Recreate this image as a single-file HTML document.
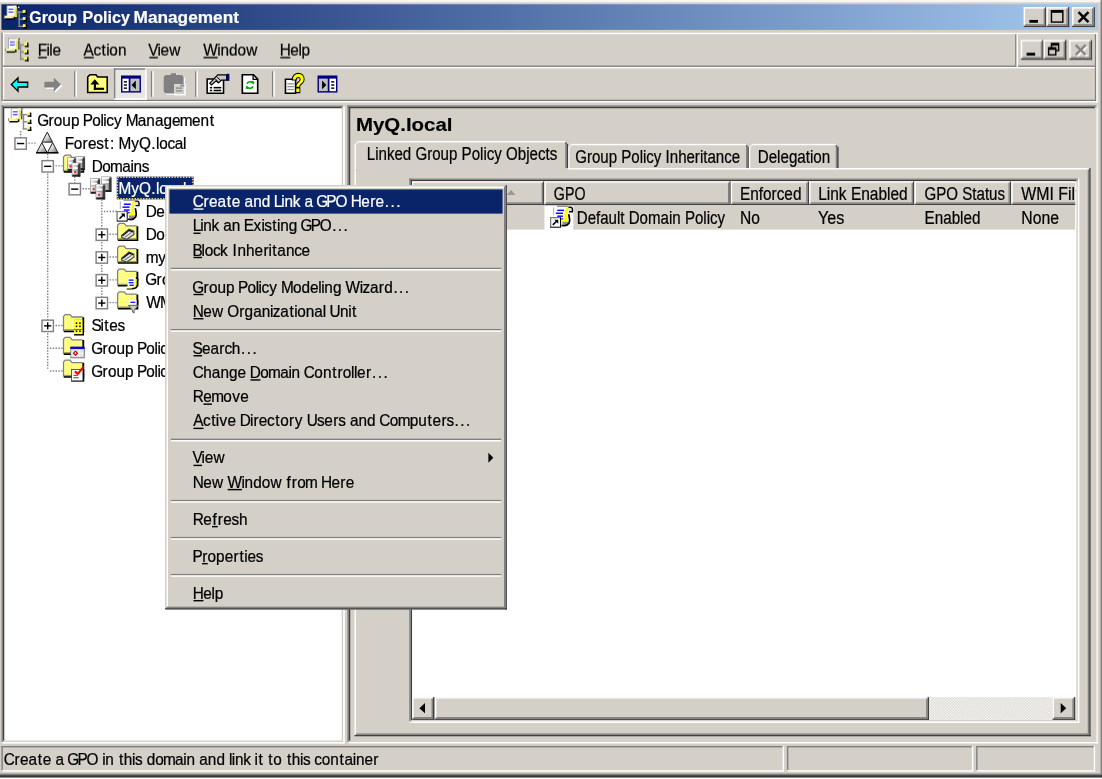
<!DOCTYPE html>
<html lang="en"><head><meta charset="utf-8"><title>Group Policy Management</title>
<style>
html,body{margin:0;padding:0;background:#d4d0c8;overflow:hidden}
body{width:1102px;height:779px;font-family:"Liberation Sans",sans-serif}
svg{display:block;position:absolute;left:0;top:0;will-change:transform}
text{font-family:"Liberation Sans",sans-serif}
.t{font-size:11.6px}
</style></head><body>
<svg width="1102" height="779" viewBox="0 0 774 547" preserveAspectRatio="none">
<defs>
<pattern id="dy" width="2" height="2" patternUnits="userSpaceOnUse"><rect width="2" height="2" fill="#ffffff"/><rect width="1" height="1" fill="#ffff00"/><rect x="1" y="1" width="1" height="1" fill="#ffff00"/></pattern>
<pattern id="dw" width="2" height="2" patternUnits="userSpaceOnUse"><rect width="2" height="2" fill="#d4d0c8"/><rect width="1" height="1" fill="#ffffff"/><rect x="1" y="1" width="1" height="1" fill="#ffffff"/></pattern>
<linearGradient id="gsv" x1="0" x2="1" y1="0" y2="0"><stop offset="0" stop-color="#f4f4f4"/><stop offset=".5" stop-color="#c4c4c4"/><stop offset="1" stop-color="#6c6c6c"/></linearGradient>
<linearGradient id="gtr" x1="0" x2="1" y1="0" y2="1"><stop offset="0" stop-color="#ffffff"/><stop offset=".45" stop-color="#e0e0e0"/><stop offset="1" stop-color="#6a6a6a"/></linearGradient>
</defs>
<rect x="0" y="0" width="774" height="547" fill="#d4d0c8"/>
<rect x="0" y="0" width="774" height="1.6" fill="#f7f6f3"/>
<rect x="773" y="0" width="1" height="547" fill="#808080"/>
<rect x="0" y="543.2" width="774" height="1.2" fill="#808080"/>
<rect x="0" y="544.3" width="774" height="1.8" fill="#383838"/>
<rect x="0" y="546.1" width="774" height="1" fill="#ffffff"/>
<defs><linearGradient id="tg" x1="0" x2="1" y1="0" y2="0"><stop offset="0" stop-color="#0a246a"/><stop offset="1" stop-color="#a6caf0"/></linearGradient></defs>
<rect x="1" y="3" width="770" height="18" fill="url(#tg)"/>
<text x="20.6" y="16" textLength="33.4" lengthAdjust="spacingAndGlyphs" font-size="11.6" font-weight="bold" fill="#ffffff" stroke="#ffffff" stroke-width="0.12">Group</text>
<text x="58" y="16" textLength="33.2" lengthAdjust="spacingAndGlyphs" font-size="11.6" font-weight="bold" fill="#ffffff" stroke="#ffffff" stroke-width="0.12">Policy</text>
<text x="93.8" y="16" textLength="74" lengthAdjust="spacingAndGlyphs" font-size="11.6" font-weight="bold" fill="#ffffff" stroke="#ffffff" stroke-width="0.12">Management</text>
<rect x="719" y="5" width="16" height="14" fill="#d4d0c8"/>
<rect x="719" y="5" width="16" height="1" fill="#ffffff"/>
<rect x="719" y="5" width="1" height="14" fill="#ffffff"/>
<rect x="719" y="18" width="16" height="1" fill="#404040"/>
<rect x="734" y="5" width="1" height="14" fill="#404040"/>
<rect x="720" y="17" width="14" height="1" fill="#808080"/>
<rect x="733" y="6" width="1" height="12" fill="#808080"/>
<rect x="723" y="14" width="6" height="2" fill="#000000"/>
<rect x="735" y="5" width="16" height="14" fill="#d4d0c8"/>
<rect x="735" y="5" width="16" height="1" fill="#ffffff"/>
<rect x="735" y="5" width="1" height="14" fill="#ffffff"/>
<rect x="735" y="18" width="16" height="1" fill="#404040"/>
<rect x="750" y="5" width="1" height="14" fill="#404040"/>
<rect x="736" y="17" width="14" height="1" fill="#808080"/>
<rect x="749" y="6" width="1" height="12" fill="#808080"/>
<rect x="738" y="7" width="9" height="9" fill="#000000"/>
<rect x="739" y="9" width="7" height="6" fill="#d4d0c8"/>
<rect x="753" y="5" width="16" height="14" fill="#d4d0c8"/>
<rect x="753" y="5" width="16" height="1" fill="#ffffff"/>
<rect x="753" y="5" width="1" height="14" fill="#ffffff"/>
<rect x="753" y="18" width="16" height="1" fill="#404040"/>
<rect x="768" y="5" width="1" height="14" fill="#404040"/>
<rect x="754" y="17" width="14" height="1" fill="#808080"/>
<rect x="767" y="6" width="1" height="12" fill="#808080"/>
<path d="M757.5 8.5L764.5 15.5M764.5 8.5L757.5 15.5" stroke="#000000" stroke-width="1.7" fill="none"/>
<rect x="1" y="23" width="1" height="49" fill="#808080"/>
<rect x="2" y="23" width="1" height="49" fill="#ffffff"/>
<rect x="2" y="23" width="769" height="1" fill="#ffffff"/>
<rect x="2" y="46" width="768" height="1" fill="#808080"/>
<rect x="2" y="47" width="769" height="1" fill="#ffffff"/>
<rect x="2" y="70" width="768" height="1" fill="#808080"/>
<rect x="1" y="71" width="770" height="1" fill="#ffffff"/>
<rect x="713" y="24" width="1" height="22" fill="#808080"/>
<rect x="714" y="24" width="1" height="23" fill="#ffffff"/>
<rect x="769" y="24" width="1" height="47" fill="#808080"/>
<rect x="770" y="23" width="1" height="49" fill="#ffffff"/>
<text class="t" transform="translate(26 39.05) scale(0.93 1)" x="0.54 7.10 9.25 11.61" stroke="#000000" stroke-width="0.172">File</text>
<rect x="26.9" y="39.9" width="6" height="1" fill="#000000"/>
<text class="t" transform="translate(58 39.05) scale(0.93 1)" x="0.76 8.18 14.30 17.85 20.22 26.67" stroke="#000000" stroke-width="0.172">Action</text>
<rect x="58.9" y="39.9" width="7" height="1" fill="#000000"/>
<text class="t" transform="translate(104 39.05) scale(0.93 1)" x="0.22 7.10 9.46 16.03" stroke="#000000" stroke-width="0.172">View</text>
<rect x="104.9" y="39.9" width="6" height="1" fill="#000000"/>
<text class="t" transform="translate(142 39.05) scale(0.93 1)" x="0.76 11.40 13.76 20.22 26.67 33.23" stroke="#000000" stroke-width="0.172">Window</text>
<rect x="142.9" y="39.9" width="10" height="1" fill="#000000"/>
<text class="t" transform="translate(196 39.05) scale(0.93 1)" x="0.44 8.39 14.63 16.99" stroke="#000000" stroke-width="0.172">Help</text>
<rect x="196.9" y="39.9" width="7" height="1" fill="#000000"/>
<rect x="717" y="28" width="16" height="14" fill="#d4d0c8"/>
<rect x="717" y="28" width="16" height="1" fill="#ffffff"/>
<rect x="717" y="28" width="1" height="14" fill="#ffffff"/>
<rect x="717" y="41" width="16" height="1" fill="#404040"/>
<rect x="732" y="28" width="1" height="14" fill="#404040"/>
<rect x="718" y="40" width="14" height="1" fill="#808080"/>
<rect x="731" y="29" width="1" height="12" fill="#808080"/>
<rect x="721" y="37" width="6" height="2" fill="#000000"/>
<rect x="733" y="28" width="16" height="14" fill="#d4d0c8"/>
<rect x="733" y="28" width="16" height="1" fill="#ffffff"/>
<rect x="733" y="28" width="1" height="14" fill="#ffffff"/>
<rect x="733" y="41" width="16" height="1" fill="#404040"/>
<rect x="748" y="28" width="1" height="14" fill="#404040"/>
<rect x="734" y="40" width="14" height="1" fill="#808080"/>
<rect x="747" y="29" width="1" height="12" fill="#808080"/>
<rect x="738" y="30" width="6" height="6" fill="#000000"/>
<rect x="739" y="32" width="4" height="3" fill="#d4d0c8"/>
<rect x="736" y="33" width="6" height="6" fill="#000000"/>
<rect x="737" y="35" width="4" height="3" fill="#d4d0c8"/>
<rect x="751" y="28" width="16" height="14" fill="#d4d0c8"/>
<rect x="751" y="28" width="16" height="1" fill="#ffffff"/>
<rect x="751" y="28" width="1" height="14" fill="#ffffff"/>
<rect x="751" y="41" width="16" height="1" fill="#404040"/>
<rect x="766" y="28" width="1" height="14" fill="#404040"/>
<rect x="752" y="40" width="14" height="1" fill="#808080"/>
<rect x="765" y="29" width="1" height="12" fill="#808080"/>
<path d="M756.5 32.5L763.5 39.5M763.5 32.5L756.5 39.5" stroke="#fff" stroke-width="1.6" fill="none"/>
<path d="M755.5 31.5L762.5 38.5M762.5 31.5L755.5 38.5" stroke="#808080" stroke-width="1.7" fill="none"/>
<g transform="translate(3 4)"><rect x="1.6" y="-0.2" width="6.6" height="7.9" fill="#9c9c9c"/><rect x="2.2" y="0.3" width="6" height="7.4" fill="#ffffff"/><rect x="7" y="1" width="2" height="7" fill="#e8e870"/><rect x="6.5" y="0" width="2.2" height="1.2" fill="#f4f4c0"/><rect x="3" y="2" width="3.4" height="1" fill="#5a5aff"/><rect x="3" y="4" width="3.4" height="1" fill="#5a5aff"/><rect x="9" y="0" width="1" height="1" fill="#000"/><rect x="9.6" y="0.6" width="1" height="1" fill="#e0e0e0"/><rect x="8.8" y="1.4" width="0.9" height="6.4" fill="#404030"/><rect x="0" y="7" width="5.4" height="2" fill="#f4f4b0"/><rect x="5" y="7" width="2.4" height="1.8" fill="#e8e870"/><rect x="0.6" y="9" width="6" height="1" fill="#000"/><rect x="6.6" y="7.8" width="1" height="1.8" fill="#000"/><rect x="-0.3" y="7" width="0.6" height="2" fill="#808060"/><rect x="10" y="4" width="1" height="11" fill="#8a8a8a"/><rect x="8.2" y="4" width="5" height="1" fill="#8a8a8a"/><rect x="10" y="9" width="3" height="1" fill="#8a8a8a"/><rect x="10" y="14" width="3" height="1" fill="#8a8a8a"/><rect x="13" y="3" width="2.2" height="2.2" fill="#ffff40"/><rect x="15" y="3" width="1" height="3" fill="#000"/><rect x="13.4" y="5" width="2.6" height="1" fill="#000"/><rect x="13" y="8" width="2.2" height="2.2" fill="#ffff40"/><rect x="15" y="8" width="1" height="3" fill="#000"/><rect x="13.4" y="10" width="2.6" height="1" fill="#000"/><rect x="13" y="13" width="2.2" height="2.2" fill="#ffff40"/><rect x="15" y="13" width="1" height="3" fill="#000"/><rect x="13.4" y="15" width="2.6" height="1" fill="#000"/></g>
<g transform="translate(4 27)"><rect x="1.6" y="-0.2" width="6.6" height="7.9" fill="#9c9c9c"/><rect x="2.2" y="0.3" width="6" height="7.4" fill="#ffffff"/><rect x="7" y="1" width="2" height="7" fill="#e8e870"/><rect x="6.5" y="0" width="2.2" height="1.2" fill="#f4f4c0"/><rect x="3" y="2" width="3.4" height="1" fill="#5a5aff"/><rect x="3" y="4" width="3.4" height="1" fill="#5a5aff"/><rect x="9" y="0" width="1" height="1" fill="#000"/><rect x="9.6" y="0.6" width="1" height="1" fill="#e0e0e0"/><rect x="8.8" y="1.4" width="0.9" height="6.4" fill="#404030"/><rect x="0" y="7" width="5.4" height="2" fill="#f4f4b0"/><rect x="5" y="7" width="2.4" height="1.8" fill="#e8e870"/><rect x="0.6" y="9" width="6" height="1" fill="#000"/><rect x="6.6" y="7.8" width="1" height="1.8" fill="#000"/><rect x="-0.3" y="7" width="0.6" height="2" fill="#808060"/><rect x="10" y="4" width="1" height="11" fill="#8a8a8a"/><rect x="8.2" y="4" width="5" height="1" fill="#8a8a8a"/><rect x="10" y="9" width="3" height="1" fill="#8a8a8a"/><rect x="10" y="14" width="3" height="1" fill="#8a8a8a"/><rect x="13" y="3" width="2.2" height="2.2" fill="#ffff40"/><rect x="15" y="3" width="1" height="3" fill="#000"/><rect x="13.4" y="5" width="2.6" height="1" fill="#000"/><rect x="13" y="8" width="2.2" height="2.2" fill="#ffff40"/><rect x="15" y="8" width="1" height="3" fill="#000"/><rect x="13.4" y="10" width="2.6" height="1" fill="#000"/><rect x="13" y="13" width="2.2" height="2.2" fill="#ffff40"/><rect x="15" y="13" width="1" height="3" fill="#000"/><rect x="13.4" y="15" width="2.6" height="1" fill="#000"/></g>
<rect x="52" y="50" width="1" height="18" fill="#808080"/>
<rect x="53" y="50" width="1" height="18" fill="#ffffff"/>
<rect x="106" y="50" width="1" height="18" fill="#808080"/>
<rect x="107" y="50" width="1" height="18" fill="#ffffff"/>
<rect x="137" y="50" width="1" height="18" fill="#808080"/>
<rect x="138" y="50" width="1" height="18" fill="#ffffff"/>
<rect x="191" y="50" width="1" height="18" fill="#808080"/>
<rect x="192" y="50" width="1" height="18" fill="#ffffff"/>
<rect x="80" y="48" width="23" height="22" fill="url(#dw)"/>
<rect x="80" y="48" width="23" height="1" fill="#808080"/>
<rect x="80" y="48" width="1" height="22" fill="#808080"/>
<rect x="80" y="69" width="23" height="1" fill="#ffffff"/>
<rect x="102" y="48" width="1" height="22" fill="#ffffff"/>
<g transform="translate(6 51)"><path d="M2 8.4 L6.6 3.8 V6.7 H13.4 V10.1 H6.6 V13 Z" fill="#00ffff" stroke="#000" stroke-width="1"/></g>
<g transform="translate(29 51)"><g transform="translate(1 1)"><path d="M2.2 6.4 H8.8 V3.6 L13.8 8.4 L8.8 13.2 V10.4 H2.2 Z" fill="#ffffff"/></g><path d="M2.2 6.4 H8.8 V3.6 L13.8 8.4 L8.8 13.2 V10.4 H2.2 Z" fill="#808080"/></g>
<g transform="translate(60 51)"><path d="M1.6 3.1 L3.2 1.5 H7.4 L8.6 3.1 H15.3 V14 H1.6 Z" fill="url(#dy)" stroke="#000" stroke-width="1.1"/><path d="M6.6 4.6 L3.4 8.4 H9.8 Z" fill="#000"/><rect x="5.9" y="8" width="1.5" height="4" fill="#000"/><rect x="5.9" y="10.6" width="7.2" height="1.5" fill="#000"/></g>
<g transform="translate(83 51)"><rect x="2" y="2" width="14" height="12" fill="#000080"/><rect x="3" y="4.2" width="4.4" height="8.8" fill="#fff"/><rect x="8.6" y="4.2" width="6.4" height="8.8" fill="#c0c0c0"/><rect x="4" y="6" width="2.2" height="1" fill="#000"/><rect x="4" y="8.2" width="2.2" height="1" fill="#000"/><rect x="4" y="10.4" width="2.2" height="1" fill="#000"/><path d="M12.4 5.6 V11.6 L9.4 8.6 Z" fill="#000"/></g>
<g transform="translate(114 51)"><g transform="translate(1 1)"><rect x="1" y="1.6" width="14" height="13" rx="2.2" fill="#ffffff"/><rect x="6" y=".4" width="3.6" height="2" fill="#ffffff"/></g><rect x="1" y="1.6" width="14" height="13" rx="2.2" fill="#808080"/><rect x="6" y=".4" width="3.6" height="2" fill="#808080"/><rect x="8.4" y="8" width="8" height="8" fill="#ffffff"/><rect x="8.6" y="8.2" width="6.8" height="6.8" fill="#d4d0c8"/><rect x="9.6" y="10.4" width="4.4" height="0.9" fill="#8a8a8a"/><rect x="9.6" y="12.4" width="4.4" height="0.9" fill="#8a8a8a"/><rect x="12.6" y="8.2" width="2.8" height="1.6" fill="#9a9a9a"/></g>
<g transform="translate(145 51)"><path d="M.5 4.5 H12 V14.5 H.5 Z" fill="#fff" stroke="#000" stroke-width="1.1"/><rect x="2.4" y="10" width="1.6" height="1.1" fill="#000"/><rect x="5" y="10" width="5.4" height="1.1" fill="#000"/><rect x="2.4" y="12" width="1.6" height="1.1" fill="#000"/><rect x="5" y="12" width="5.4" height="1.1" fill="#000"/><path d="M8 1.5 H14.2 V5.2 H10.6 L8.4 7.2 L6.8 5.8 L3.6 8.6 L2.4 7.4 L6.6 3 Z" fill="#c8c8c8" stroke="#000" stroke-width="0.9"/><path d="M7.6 3.2 L10.2 5.8 M6.2 4.4 L8.6 6.8" fill="none" stroke="#000" stroke-width="0.7"/><rect x="14.3" y="0.8" width="1.8" height="5" fill="#000080"/></g>
<g transform="translate(168 51)"><g transform="translate(1.6 0)"><path d="M.6 1.5 H8.4 L11.4 4.5 V14.5 H.6 Z" fill="#fff" stroke="#000" stroke-width="1.15"/><path d="M8.2 1.6 V4.7 H11.4" fill="none" stroke="#000" stroke-width="0.9"/><path d="M3.8 7.8 A2.5 2.5 0 0 1 8 7.4" fill="none" stroke="#00a000" stroke-width="1.1"/><path d="M8.2 9.6 A2.5 2.5 0 0 1 4 10" fill="none" stroke="#00a000" stroke-width="1.1"/><path d="M6.8 5.8 L9.2 6.3 L8.3 8.5 Z" fill="#00a000"/><path d="M5.2 11.6 L2.8 11.1 L3.7 8.9 Z" fill="#00a000"/></g></g>
<g transform="translate(199 51)"><path d="M1.5 4.6 H8.6 V14.5 H1.5 Z" fill="#fff" stroke="#000" stroke-width="1.1"/><rect x="2.8" y="7.4" width="4.6" height="0.9" fill="#909090"/><rect x="2.8" y="9.4" width="4.6" height="0.9" fill="#909090"/><rect x="2.8" y="11.4" width="4.6" height="0.9" fill="#909090"/><text x="5.9" y="13.3" font-size="17.6" font-weight="bold" fill="#ffff00" stroke="#000" stroke-width="1.6" paint-order="stroke" textLength="9.2" lengthAdjust="spacingAndGlyphs">?</text></g>
<g transform="translate(222 51)"><rect x="1" y="2" width="14" height="12" fill="#000080"/><rect x="2" y="4.2" width="6.2" height="8.8" fill="#c0c0c0"/><rect x="9.4" y="4.2" width="4.6" height="8.8" fill="#fff"/><rect x="10.6" y="6" width="2.2" height="1" fill="#000"/><rect x="10.6" y="8.2" width="2.2" height="1" fill="#000"/><rect x="10.6" y="10.4" width="2.2" height="1" fill="#000"/><path d="M4.2 5.6 V11.6 L7.2 8.6 Z" fill="#000"/></g>
<rect x="1" y="74" width="241" height="448" fill="#ffffff"/>
<rect x="1" y="74" width="241" height="1" fill="#808080"/>
<rect x="1" y="74" width="1" height="448" fill="#808080"/>
<rect x="1" y="521" width="241" height="1" fill="#ffffff"/>
<rect x="241" y="74" width="1" height="448" fill="#ffffff"/>
<rect x="2" y="75" width="239" height="1" fill="#404040"/>
<rect x="2" y="75" width="1" height="446" fill="#404040"/>
<rect x="2" y="520" width="239" height="1" fill="#d4d0c8"/>
<rect x="240" y="75" width="1" height="446" fill="#d4d0c8"/>
<clipPath id="ctree"><rect x="3" y="76" width="236" height="443"/></clipPath>
<g clip-path="url(#ctree)">
<line x1="14.5" y1="92" x2="14.5" y2="100" stroke="#808080" stroke-width="1" stroke-dasharray="1 1"/>
<line x1="16" y1="100.5" x2="25" y2="100.5" stroke="#808080" stroke-width="1" stroke-dasharray="1 1"/>
<line x1="33.5" y1="108" x2="33.5" y2="260" stroke="#808080" stroke-width="1" stroke-dasharray="1 1"/>
<line x1="35" y1="116.5" x2="44" y2="116.5" stroke="#808080" stroke-width="1" stroke-dasharray="1 1"/>
<line x1="35" y1="228.5" x2="44" y2="228.5" stroke="#808080" stroke-width="1" stroke-dasharray="1 1"/>
<line x1="35" y1="244.5" x2="44" y2="244.5" stroke="#808080" stroke-width="1" stroke-dasharray="1 1"/>
<line x1="35" y1="260.5" x2="44" y2="260.5" stroke="#808080" stroke-width="1" stroke-dasharray="1 1"/>
<line x1="52.5" y1="124" x2="52.5" y2="132" stroke="#808080" stroke-width="1" stroke-dasharray="1 1"/>
<line x1="54" y1="132.5" x2="63" y2="132.5" stroke="#808080" stroke-width="1" stroke-dasharray="1 1"/>
<line x1="71.5" y1="140" x2="71.5" y2="212" stroke="#808080" stroke-width="1" stroke-dasharray="1 1"/>
<line x1="73" y1="148.5" x2="82" y2="148.5" stroke="#808080" stroke-width="1" stroke-dasharray="1 1"/>
<line x1="73" y1="164.5" x2="82" y2="164.5" stroke="#808080" stroke-width="1" stroke-dasharray="1 1"/>
<line x1="73" y1="180.5" x2="82" y2="180.5" stroke="#808080" stroke-width="1" stroke-dasharray="1 1"/>
<line x1="73" y1="196.5" x2="82" y2="196.5" stroke="#808080" stroke-width="1" stroke-dasharray="1 1"/>
<line x1="73" y1="212.5" x2="82" y2="212.5" stroke="#808080" stroke-width="1" stroke-dasharray="1 1"/>
<text class="t" transform="translate(26 88.45) scale(0.93 1)" x="0.11 8.61 12.69 19.14 25.59 31.18 34.63 41.72 47.96 50.11 52.26 58.18 63.44 67.00 76.13 82.58 89.03 95.48 101.94 107.86 116.99 123.44 130.43" stroke="#000000" stroke-width="0.172">Group Policy Management</text>
<rect x="10" y="96.3" width="9" height="9" fill="#808080"/>
<rect x="11" y="97.3" width="7" height="7" fill="#ffffff"/>
<rect x="12" y="100.3" width="5" height="1" fill="#000000"/>
<text class="t" transform="translate(45 104.45) scale(0.93 1)" x="0.54 7.31 13.98 18.06 24.30 30.43 34.73 37.63 41.19 50.65 56.56 65.92 69.46 71.83 78.07 83.66 89.89" stroke="#000000" stroke-width="0.172">Forest: MyQ.local</text>
<rect x="29" y="112.3" width="9" height="9" fill="#808080"/>
<rect x="30" y="113.3" width="7" height="7" fill="#ffffff"/>
<rect x="31" y="116.3" width="5" height="1" fill="#000000"/>
<text class="t" transform="translate(64 120.45) scale(0.93 1)" x="0.44 8.39 14.31 23.44 29.68 32.04 38.28" stroke="#000000" stroke-width="0.172">Domains</text>
<rect x="48" y="128.3" width="9" height="9" fill="#808080"/>
<rect x="49" y="129.3" width="7" height="7" fill="#ffffff"/>
<rect x="50" y="132.3" width="5" height="1" fill="#000000"/>
<rect x="82" y="124" width="54" height="16" fill="#0a246a"/>
<rect x="82.5" y="124.5" width="53" height="15" fill="none" stroke="#f5d98a" stroke-width="1" stroke-dasharray="1 1"/>
<text class="t" transform="translate(83 136.45) scale(0.93 1)" x="0.33 9.79 15.70 25.06 28.60 30.97 37.21 42.80 49.03" stroke="#ffffff" stroke-width="0.172" fill="#ffffff">MyQ.local</text>
<text class="t" transform="translate(102 152.45) scale(0.93 1)" x="0.44 8.39 15.38 19.14 25.59 31.83 34.73 37.63 41.30 49.25 55.17 64.30 70.54 72.90 78.49 81.94 89.03 95.27 97.42 99.57 105.49" stroke="#000000" stroke-width="0.172">Default Domain Policy</text>
<rect x="67" y="160.3" width="9" height="9" fill="#808080"/>
<rect x="68" y="161.3" width="7" height="7" fill="#ffffff"/>
<rect x="69" y="164.3" width="5" height="1" fill="#000000"/>
<rect x="71" y="162.3" width="1" height="5" fill="#000000"/>
<text class="t" transform="translate(102 168.45) scale(0.93 1)" x="0.44 8.39 14.31 23.44 29.68 32.04 37.63 41.30 49.25 55.70 62.69 66.67 70.75 76.99 79.14 81.51 88.18 92.05" stroke="#000000" stroke-width="0.172">Domain Controllers</text>
<rect x="67" y="176.3" width="9" height="9" fill="#808080"/>
<rect x="68" y="177.3" width="7" height="7" fill="#ffffff"/>
<rect x="69" y="180.3" width="5" height="1" fill="#000000"/>
<rect x="71" y="178.3" width="1" height="5" fill="#000000"/>
<text class="t" transform="translate(102 184.45) scale(0.93 1)" x="0.33 9.79 15.91" stroke="#000000" stroke-width="0.172">myq</text>
<rect x="67" y="192.3" width="9" height="9" fill="#808080"/>
<rect x="68" y="193.3" width="7" height="7" fill="#ffffff"/>
<rect x="69" y="196.3" width="5" height="1" fill="#000000"/>
<rect x="71" y="194.3" width="1" height="5" fill="#000000"/>
<text class="t" transform="translate(102 200.45) scale(0.93 1)" x="0.11 8.61 12.69 19.14 25.59 31.18 34.63 41.72 47.96 50.11 52.26 58.18 63.44 67.32 76.13 82.90 85.81 92.05 98.17 101.72" stroke="#000000" stroke-width="0.172">Group Policy Objects</text>
<rect x="67" y="208.3" width="9" height="9" fill="#808080"/>
<rect x="68" y="209.3" width="7" height="7" fill="#ffffff"/>
<rect x="69" y="212.3" width="5" height="1" fill="#000000"/>
<rect x="71" y="210.3" width="1" height="5" fill="#000000"/>
<text class="t" transform="translate(102 216.45) scale(0.93 1)" x="0.76 11.08 20.75 23.66 27.42 33.98 36.13 39.03 42.80 49.47 53.34" stroke="#000000" stroke-width="0.172">WMI Filters</text>
<rect x="29" y="224.3" width="9" height="9" fill="#808080"/>
<rect x="30" y="225.3" width="7" height="7" fill="#ffffff"/>
<rect x="31" y="228.3" width="5" height="1" fill="#000000"/>
<rect x="33" y="226.3" width="1" height="5" fill="#000000"/>
<text class="t" transform="translate(64 232.45) scale(0.93 1)" x="0.22 7.10 10.00 13.76 20.00" stroke="#000000" stroke-width="0.172">Sites</text>
<text class="t" transform="translate(64 248.45) scale(0.93 1)" x="0.11 8.61 12.69 19.14 25.59 31.18 34.63 41.72 47.96 50.11 52.26 58.18 63.44 67.00 76.13 82.58 89.03 95.27 97.42 99.79 106.24" stroke="#000000" stroke-width="0.172">Group Policy Modeling</text>
<text class="t" transform="translate(64 264.45) scale(0.93 1)" x="0.11 8.61 12.69 19.14 25.59 31.18 34.63 41.72 47.96 50.11 52.26 58.18 63.44 67.10 75.05 81.29 86.88 93.12 96.02 99.57" stroke="#000000" stroke-width="0.172">Group Policy Results</text>
<g transform="translate(6 76)"><rect x="1.6" y="-0.2" width="6.6" height="7.9" fill="#9c9c9c"/><rect x="2.2" y="0.3" width="6" height="7.4" fill="#ffffff"/><rect x="7" y="1" width="2" height="7" fill="#e8e870"/><rect x="6.5" y="0" width="2.2" height="1.2" fill="#f4f4c0"/><rect x="3" y="2" width="3.4" height="1" fill="#5a5aff"/><rect x="3" y="4" width="3.4" height="1" fill="#5a5aff"/><rect x="9" y="0" width="1" height="1" fill="#000"/><rect x="9.6" y="0.6" width="1" height="1" fill="#e0e0e0"/><rect x="8.8" y="1.4" width="0.9" height="6.4" fill="#404030"/><rect x="0" y="7" width="5.4" height="2" fill="#f4f4b0"/><rect x="5" y="7" width="2.4" height="1.8" fill="#e8e870"/><rect x="0.6" y="9" width="6" height="1" fill="#000"/><rect x="6.6" y="7.8" width="1" height="1.8" fill="#000"/><rect x="-0.3" y="7" width="0.6" height="2" fill="#808060"/><rect x="10" y="4" width="1" height="11" fill="#8a8a8a"/><rect x="8.2" y="4" width="5" height="1" fill="#8a8a8a"/><rect x="10" y="9" width="3" height="1" fill="#8a8a8a"/><rect x="10" y="14" width="3" height="1" fill="#8a8a8a"/><rect x="13" y="3" width="2.2" height="2.2" fill="#ffff40"/><rect x="15" y="3" width="1" height="3" fill="#000"/><rect x="13.4" y="5" width="2.6" height="1" fill="#000"/><rect x="13" y="8" width="2.2" height="2.2" fill="#ffff40"/><rect x="15" y="8" width="1" height="3" fill="#000"/><rect x="13.4" y="10" width="2.6" height="1" fill="#000"/><rect x="13" y="13" width="2.2" height="2.2" fill="#ffff40"/><rect x="15" y="13" width="1" height="3" fill="#000"/><rect x="13.4" y="15" width="2.6" height="1" fill="#000"/></g>
<g transform="translate(25 92)"><path d="M8.2 .6 L.6 15.3 H15.8 Z" fill="#fff"/><path d="M8.2 0.8 L4.5 7.8 L11.9 7.8 Z" fill="url(#gtr)" stroke="#202020" stroke-width="0.7"/><path d="M4.4 8.2 L0.7 15.2 L8.1 15.2 Z" fill="url(#gtr)" stroke="#202020" stroke-width="0.7"/><path d="M12 8.2 L8.3 15.2 L15.7 15.2 Z" fill="url(#gtr)" stroke="#202020" stroke-width="0.7"/><rect x="0.3" y="14.8" width="15.8" height="1" fill="#000"/></g>
<g transform="translate(44 108)"><path d="M.6 12.6 V2.2 L1.8 .9 H5.2 L6.6 2.6 H14.4 V12.6 Z" fill="url(#dy)"/><path d="M.6 12.4 V2.2 L1.8 .9 H5.2 L6.6 2.6 H14" fill="none" stroke="#808080" stroke-width="0.9"/><path d="M14.5 2.8 V12.6 H.8" fill="none" stroke="#000" stroke-width="1.3"/><rect x="1" y="11.2" width="13" height="1" fill="#9c9c60"/><g transform="translate(3.6 3)"><rect x="-0.4" y="-0.4" width="6.2" height="9.4" fill="#7c7c7c"/><rect x="0" y="0" width="5.4" height="8.6" fill="url(#gsv)"/><rect x="3.9" y="0.6" width="1.7" height="8.4" fill="#3c3c3c"/><rect x="0" y="7.6" width="5.4" height="1.4" fill="#202020"/><rect x="0" y="0" width="4.2" height="1.2" fill="#fafafa"/><rect x="0.3" y="2.8" width="3.4" height="1.3" fill="#ffffff"/><rect x="0.3" y="4.6" width="3.4" height="0.6" fill="#9a9a9a"/><rect x="1.3" y="5.2" width="1.3" height="1.3" fill="#ff0000"/></g><g transform="translate(9.6 2.2)"><rect x="-0.4" y="-0.4" width="6.6" height="9.6" fill="#7c7c7c"/><rect x="0" y="0" width="5.8" height="8.8" fill="url(#gsv)"/><rect x="4.3" y="0.6" width="1.7" height="8.6" fill="#3c3c3c"/><rect x="0" y="7.8" width="5.8" height="1.4" fill="#202020"/><rect x="0" y="0" width="4.6" height="1.2" fill="#fafafa"/><rect x="0.3" y="2.8" width="3.8" height="1.3" fill="#ffffff"/><rect x="0.3" y="4.6" width="3.8" height="0.6" fill="#9a9a9a"/><rect x="1.3" y="5.4" width="1.3" height="1.3" fill="#ff0000"/></g><g transform="translate(6.8 6.6)"><rect x="-0.4" y="-0.4" width="6.2" height="9.8" fill="#7c7c7c"/><rect x="0" y="0" width="5.4" height="9" fill="url(#gsv)"/><rect x="3.9" y="0.6" width="1.7" height="8.8" fill="#3c3c3c"/><rect x="0" y="8" width="5.4" height="1.4" fill="#202020"/><rect x="0" y="0" width="4.2" height="1.2" fill="#fafafa"/><rect x="0.3" y="2.8" width="3.4" height="1.3" fill="#ffffff"/><rect x="0.3" y="4.6" width="3.4" height="0.6" fill="#9a9a9a"/><rect x="1.3" y="5.6" width="1.3" height="1.3" fill="#ff0000"/></g></g>
<g transform="translate(63 124)"><g transform="translate(0.8 1.6)"><rect x="-0.4" y="-0.4" width="7" height="10.8" fill="#7c7c7c"/><rect x="0" y="0" width="6.2" height="10" fill="url(#gsv)"/><rect x="4.7" y="0.6" width="1.7" height="9.8" fill="#3c3c3c"/><rect x="0" y="9" width="6.2" height="1.4" fill="#202020"/><rect x="0" y="0" width="5" height="1.2" fill="#fafafa"/><rect x="0.3" y="2.8" width="4.2" height="1.3" fill="#ffffff"/><rect x="0.3" y="4.6" width="4.2" height="0.6" fill="#9a9a9a"/><rect x="1.3" y="6.6" width="1.3" height="1.3" fill="#ff0000"/></g><g transform="translate(8.4 0.4)"><rect x="-0.4" y="-0.4" width="7.4" height="10.8" fill="#7c7c7c"/><rect x="0" y="0" width="6.6" height="10" fill="url(#gsv)"/><rect x="5.1" y="0.6" width="1.7" height="9.8" fill="#3c3c3c"/><rect x="0" y="9" width="6.6" height="1.4" fill="#202020"/><rect x="0" y="0" width="5.4" height="1.2" fill="#fafafa"/><rect x="0.3" y="2.8" width="4.6" height="1.3" fill="#ffffff"/><rect x="0.3" y="4.6" width="4.6" height="0.6" fill="#9a9a9a"/><rect x="1.3" y="6.6" width="1.3" height="1.3" fill="#ff0000"/></g><g transform="translate(4.6 5.6)"><rect x="-0.4" y="-0.4" width="6.8" height="10.8" fill="#7c7c7c"/><rect x="0" y="0" width="6" height="10" fill="url(#gsv)"/><rect x="4.5" y="0.6" width="1.7" height="9.8" fill="#3c3c3c"/><rect x="0" y="9" width="6" height="1.4" fill="#202020"/><rect x="0" y="0" width="4.8" height="1.2" fill="#fafafa"/><rect x="0.3" y="2.8" width="4" height="1.3" fill="#ffffff"/><rect x="0.3" y="4.6" width="4" height="0.6" fill="#9a9a9a"/><rect x="1.3" y="6.6" width="1.3" height="1.3" fill="#ff0000"/></g></g>
<g transform="translate(82 140)"><rect x="2.1" y="1.3" width="0.9" height="5.6" fill="#b4b4b4"/><rect x="2.9" y="0.9" width="7.6" height="9.3" fill="#fff"/><rect x="4.8" y="0.1" width="8" height="0.9" fill="#8a8a8a"/><rect x="5" y="2.9" width="4.8" height="1" fill="#0000ff"/><rect x="4" y="4.95" width="5" height="1" fill="#0000ff"/><rect x="5" y="7" width="4" height="1" fill="#0000ff"/><rect x="7.8" y="8.9" width="2.4" height="1" fill="#2020ff"/><path d="M8.4 11.2 H12.8 L12.2 13.6 H8.8 Z" fill="#8c8c8c"/><path d="M11.6 .9 L13.2 .9 L12 5.6 L12.6 11.2 L8 11.4 L9.8 8 L10.2 4.2 Z" fill="#ffff00"/><path d="M12.9 1.2 H14.6 Q16 1.4 15.6 4.4 H13.2" fill="#e4e4e4" stroke="#000" stroke-width="1"/><path d="M13 6.2 Q14.2 10.6 13.2 12.4 Q11.6 14.8 8 13.9" fill="none" stroke="#000" stroke-width="1.2"/><rect x="0" y="8.2" width="7.7" height="7.4" fill="#000"/><rect x="0" y="8.2" width="6.9" height="6.6" fill="#8c8c8c"/><rect x="0.8" y="9" width="6.1" height="5.8" fill="#fff"/><path d="M1.9 13.6 L5 10.5" fill="none" stroke="#000" stroke-width="1.1"/><path d="M2.9 10 H5.7 V12.8 Z" fill="#000"/></g>
<g transform="translate(82 156)"><path d="M.6 12.6 V2.2 L1.8 .9 H5.2 L6.6 2.6 H14.4 V12.6 Z" fill="url(#dy)"/><path d="M.6 12.4 V2.2 L1.8 .9 H5.2 L6.6 2.6 H14" fill="none" stroke="#808080" stroke-width="0.9"/><path d="M14.5 2.8 V12.6 H.8" fill="none" stroke="#000" stroke-width="1.3"/><rect x="1" y="11.2" width="13" height="1" fill="#9c9c60"/><path d="M3.4 9.4 L8.6 5 L12 6.4 L12 8.6 L7 12 L3.4 10.6 Z" fill="#e8e8e8" stroke="#505050" stroke-width="0.9"/><path d="M4 9.6 L8.8 5.8 L11.4 6.9" fill="none" stroke="#000" stroke-width="0.8"/><path d="M5.6 10.6 L10.6 7" fill="none" stroke="#808080" stroke-width="0.8"/></g>
<g transform="translate(82 172)"><path d="M.6 12.6 V2.2 L1.8 .9 H5.2 L6.6 2.6 H14.4 V12.6 Z" fill="url(#dy)"/><path d="M.6 12.4 V2.2 L1.8 .9 H5.2 L6.6 2.6 H14" fill="none" stroke="#808080" stroke-width="0.9"/><path d="M14.5 2.8 V12.6 H.8" fill="none" stroke="#000" stroke-width="1.3"/><rect x="1" y="11.2" width="13" height="1" fill="#9c9c60"/><path d="M3.4 9.4 L8.6 5 L12 6.4 L12 8.6 L7 12 L3.4 10.6 Z" fill="#e8e8e8" stroke="#505050" stroke-width="0.9"/><path d="M4 9.6 L8.8 5.8 L11.4 6.9" fill="none" stroke="#000" stroke-width="0.8"/><path d="M5.6 10.6 L10.6 7" fill="none" stroke="#808080" stroke-width="0.8"/></g>
<g transform="translate(82 188)"><path d="M.6 12.6 V2.2 L1.8 .9 H5.2 L6.6 2.6 H14.4 V12.6 Z" fill="url(#dy)"/><path d="M.6 12.4 V2.2 L1.8 .9 H5.2 L6.6 2.6 H14" fill="none" stroke="#808080" stroke-width="0.9"/><path d="M14.5 2.8 V12.6 H.8" fill="none" stroke="#000" stroke-width="1.3"/><rect x="1" y="11.2" width="13" height="1" fill="#9c9c60"/><rect x="7.6" y="7" width="5.4" height="6.6" fill="#fff"/><rect x="8.4" y="8.2" width="3.4" height="1" fill="#2020ff"/><rect x="8.4" y="10" width="3.4" height="1" fill="#2020ff"/><rect x="9" y="11.8" width="3" height="1" fill="#2020ff"/><rect x="12.4" y="8" width="1.6" height="5.6" fill="#ffff00"/><path d="M13.4 7 Q15.4 7.4 14.6 9.6 V12 Q14.4 14.8 10 14.8 H7" fill="none" stroke="#000" stroke-width="1"/><rect x="6.6" y="13.2" width="4" height="1.4" fill="#ffffa0"/></g>
<g transform="translate(82 204)"><path d="M.6 12.6 V2.2 L1.8 .9 H5.2 L6.6 2.6 H14.4 V12.6 Z" fill="url(#dy)"/><path d="M.6 12.4 V2.2 L1.8 .9 H5.2 L6.6 2.6 H14" fill="none" stroke="#808080" stroke-width="0.9"/><path d="M14.5 2.8 V12.6 H.8" fill="none" stroke="#000" stroke-width="1.3"/><rect x="1" y="11.2" width="13" height="1" fill="#9c9c60"/><rect x="8.4" y="6.6" width="6" height="3.4" fill="#fff"/><rect x="9.6" y="7.8" width="3.4" height="1" fill="#2020ff"/><path d="M14.6 6.4 V10" fill="none" stroke="#000" stroke-width="1.2"/><path d="M8.2 10.4 H15 L12.2 14 V15.8 L11 15 V14 Z" fill="#c8c8c8" stroke="#606060" stroke-width="0.7"/></g>
<g transform="translate(44 220)"><path d="M.6 12.6 V2.2 L1.8 .9 H5.2 L6.6 2.6 H14.4 V12.6 Z" fill="url(#dy)"/><path d="M.6 12.4 V2.2 L1.8 .9 H5.2 L6.6 2.6 H14" fill="none" stroke="#808080" stroke-width="0.9"/><path d="M14.5 2.8 V12.6 H.8" fill="none" stroke="#000" stroke-width="1.3"/><rect x="1" y="11.2" width="13" height="1" fill="#9c9c60"/><rect x="8" y="4.6" width="7" height="11" fill="#000"/><rect x="8" y="4.6" width="6" height="10" fill="#ffff40"/><rect x="9.2" y="6.4" width="1.1" height="1.1" fill="#000"/><rect x="9.2" y="8.6" width="1.1" height="1.1" fill="#000"/><rect x="9.2" y="12" width="1.1" height="1.1" fill="#000"/><rect x="11.6" y="6.4" width="1.1" height="1.1" fill="#000"/><rect x="11.6" y="8.6" width="1.1" height="1.1" fill="#000"/><rect x="11.6" y="12" width="1.1" height="1.1" fill="#000"/><rect x="8" y="11" width="6" height="0.8" fill="#808000"/></g>
<g transform="translate(44 236)"><path d="M.6 12.6 V2.2 L1.8 .9 H5.2 L6.6 2.6 H14.4 V12.6 Z" fill="url(#dy)"/><path d="M.6 12.4 V2.2 L1.8 .9 H5.2 L6.6 2.6 H14" fill="none" stroke="#808080" stroke-width="0.9"/><path d="M14.5 2.8 V12.6 H.8" fill="none" stroke="#000" stroke-width="1.3"/><rect x="1" y="11.2" width="13" height="1" fill="#9c9c60"/><rect x="5.4" y="7.6" width="10.2" height="8" fill="#808080"/><rect x="5.4" y="7.4" width="10" height="1.6" fill="#0000e0"/><rect x="6" y="9.2" width="8.8" height="5.6" fill="#e4e4e4"/><rect x="8.6" y="9.2" width="0.5" height="5.6" fill="#fff"/><rect x="11.4" y="9.2" width="0.5" height="5.6" fill="#fff"/><rect x="6" y="11.8" width="8.8" height="0.5" fill="#fff"/><path d="M9 10.6 L10.4 12 L9 13.4 L7.6 12 Z" fill="none" stroke="#c00000" stroke-width="0.8"/></g>
<g transform="translate(44 252)"><path d="M.6 12.6 V2.2 L1.8 .9 H5.2 L6.6 2.6 H14.4 V12.6 Z" fill="url(#dy)"/><path d="M.6 12.4 V2.2 L1.8 .9 H5.2 L6.6 2.6 H14" fill="none" stroke="#808080" stroke-width="0.9"/><path d="M14.5 2.8 V12.6 H.8" fill="none" stroke="#000" stroke-width="1.3"/><rect x="1" y="11.2" width="13" height="1" fill="#9c9c60"/><rect x="6" y="7.2" width="9.2" height="8.8" fill="#000"/><rect x="6.4" y="7.6" width="7.6" height="7.6" fill="#fff"/><rect x="7.6" y="11.2" width="3" height="0.8" fill="#606060"/><rect x="7.6" y="12.8" width="3.6" height="0.8" fill="#606060"/><path d="M8.6 8.8 L10.6 10.6 L14.8 5.4" fill="none" stroke="#ff0000" stroke-width="1.5"/></g>
</g>
<rect x="244" y="74" width="527" height="1" fill="#808080"/>
<rect x="244" y="74" width="1" height="448" fill="#808080"/>
<rect x="244" y="521" width="527" height="1" fill="#ffffff"/>
<rect x="770" y="74" width="1" height="448" fill="#ffffff"/>
<rect x="245" y="75" width="525" height="1" fill="#404040"/>
<rect x="245" y="75" width="1" height="446" fill="#404040"/>
<rect x="245" y="520" width="525" height="1" fill="#d4d0c8"/>
<rect x="769" y="75" width="1" height="446" fill="#d4d0c8"/>
<text x="250" y="92" textLength="67.8" lengthAdjust="spacingAndGlyphs" font-size="13.4" font-weight="bold" stroke="#000000" stroke-width="0.12">MyQ.local</text>
<rect x="249" y="118" width="516" height="1" fill="#ffffff"/>
<rect x="249" y="118" width="1" height="398" fill="#ffffff"/>
<rect x="765" y="118" width="1" height="399" fill="#404040"/>
<rect x="249" y="516" width="517" height="1" fill="#404040"/>
<rect x="764" y="119" width="1" height="397" fill="#808080"/>
<rect x="250" y="515" width="515" height="1" fill="#808080"/>
<rect x="399" y="101" width="127" height="17" fill="#d4d0c8"/>
<rect x="401" y="101" width="123" height="1" fill="#ffffff"/>
<rect x="399" y="103" width="1" height="15" fill="#ffffff"/>
<rect x="400" y="102" width="1" height="1" fill="#ffffff"/>
<rect x="524" y="103" width="1" height="15" fill="#808080"/>
<rect x="525" y="103" width="1" height="15" fill="#404040"/>
<rect x="524" y="102" width="1" height="1" fill="#404040"/>
<text x="404" y="114.5" textLength="115.8" lengthAdjust="spacingAndGlyphs" font-size="12.4" stroke="#000000" stroke-width="0.16">Group Policy Inheritance</text>
<rect x="526" y="101" width="63" height="17" fill="#d4d0c8"/>
<rect x="528" y="101" width="59" height="1" fill="#ffffff"/>
<rect x="526" y="103" width="1" height="15" fill="#ffffff"/>
<rect x="527" y="102" width="1" height="1" fill="#ffffff"/>
<rect x="587" y="103" width="1" height="15" fill="#808080"/>
<rect x="588" y="103" width="1" height="15" fill="#404040"/>
<rect x="587" y="102" width="1" height="1" fill="#404040"/>
<text x="532.2" y="114.5" textLength="50.9" lengthAdjust="spacingAndGlyphs" font-size="12.4" stroke="#000000" stroke-width="0.16">Delegation</text>
<rect x="249" y="99" width="150" height="20.7" fill="#d4d0c8"/>
<rect x="251" y="99" width="146" height="1" fill="#ffffff"/>
<rect x="249" y="101" width="1" height="18" fill="#ffffff"/>
<rect x="250" y="100" width="1" height="1" fill="#ffffff"/>
<rect x="397" y="101" width="1" height="17" fill="#808080"/>
<rect x="398" y="101" width="1" height="17" fill="#404040"/>
<rect x="397" y="100" width="1" height="1" fill="#404040"/>
<text x="257.6" y="112.6" textLength="133.8" lengthAdjust="spacingAndGlyphs" font-size="12.4" stroke="#000000" stroke-width="0.16">Linked Group Policy Objects</text>
<rect x="287.4" y="125.3" width="470.6" height="382.2" fill="#ffffff"/>
<rect x="287.4" y="125.3" width="470.6" height="1" fill="#808080"/>
<rect x="287.4" y="125.3" width="1" height="382.2" fill="#808080"/>
<rect x="287.4" y="506.5" width="470.6" height="1" fill="#ffffff"/>
<rect x="757" y="125.3" width="1" height="382.2" fill="#ffffff"/>
<rect x="288.4" y="126.3" width="468.6" height="1" fill="#404040"/>
<rect x="288.4" y="126.3" width="1" height="380.2" fill="#404040"/>
<rect x="288.4" y="505.5" width="468.6" height="1" fill="#d4d0c8"/>
<rect x="756" y="126.3" width="1" height="380.2" fill="#d4d0c8"/>
<clipPath id="clist"><rect x="289.4" y="127.3" width="465.80000000000007" height="378.2"/></clipPath>
<g clip-path="url(#clist)">
<rect x="289.4" y="127.3" width="93" height="16.8" fill="#d4d0c8"/>
<rect x="289.4" y="127.3" width="93" height="1" fill="#ffffff"/>
<rect x="289.4" y="127.3" width="1" height="16.8" fill="#ffffff"/>
<rect x="289.4" y="143.1" width="93" height="1" fill="#404040"/>
<rect x="381.4" y="127.3" width="1" height="16.8" fill="#404040"/>
<rect x="290.4" y="142.1" width="91" height="1" fill="#808080"/>
<rect x="380.4" y="128.3" width="1" height="14.8" fill="#808080"/>
<rect x="382.4" y="127.3" width="130.9" height="16.8" fill="#d4d0c8"/>
<rect x="382.4" y="127.3" width="130.9" height="1" fill="#ffffff"/>
<rect x="382.4" y="127.3" width="1" height="16.8" fill="#ffffff"/>
<rect x="382.4" y="143.1" width="130.9" height="1" fill="#404040"/>
<rect x="512.3" y="127.3" width="1" height="16.8" fill="#404040"/>
<rect x="383.4" y="142.1" width="128.9" height="1" fill="#808080"/>
<rect x="511.3" y="128.3" width="1" height="14.8" fill="#808080"/>
<text x="389" y="140.3" textLength="22.2" lengthAdjust="spacingAndGlyphs" font-size="12.4" stroke="#000000" stroke-width="0.16">GPO</text>
<rect x="513.3" y="127.3" width="55" height="16.8" fill="#d4d0c8"/>
<rect x="513.3" y="127.3" width="55" height="1" fill="#ffffff"/>
<rect x="513.3" y="127.3" width="1" height="16.8" fill="#ffffff"/>
<rect x="513.3" y="143.1" width="55" height="1" fill="#404040"/>
<rect x="567.3" y="127.3" width="1" height="16.8" fill="#404040"/>
<rect x="514.3" y="142.1" width="53" height="1" fill="#808080"/>
<rect x="566.3" y="128.3" width="1" height="14.8" fill="#808080"/>
<text x="519.7" y="140.3" textLength="43.2" lengthAdjust="spacingAndGlyphs" font-size="12.4" stroke="#000000" stroke-width="0.16">Enforced</text>
<rect x="568.3" y="127.3" width="74" height="16.8" fill="#d4d0c8"/>
<rect x="568.3" y="127.3" width="74" height="1" fill="#ffffff"/>
<rect x="568.3" y="127.3" width="1" height="16.8" fill="#ffffff"/>
<rect x="568.3" y="143.1" width="74" height="1" fill="#404040"/>
<rect x="641.3" y="127.3" width="1" height="16.8" fill="#404040"/>
<rect x="569.3" y="142.1" width="72" height="1" fill="#808080"/>
<rect x="640.3" y="128.3" width="1" height="14.8" fill="#808080"/>
<text x="574.7" y="140.3" textLength="62.8" lengthAdjust="spacingAndGlyphs" font-size="12.4" stroke="#000000" stroke-width="0.16">Link Enabled</text>
<rect x="642.3" y="127.3" width="68" height="16.8" fill="#d4d0c8"/>
<rect x="642.3" y="127.3" width="68" height="1" fill="#ffffff"/>
<rect x="642.3" y="127.3" width="1" height="16.8" fill="#ffffff"/>
<rect x="642.3" y="143.1" width="68" height="1" fill="#404040"/>
<rect x="709.3" y="127.3" width="1" height="16.8" fill="#404040"/>
<rect x="643.3" y="142.1" width="66" height="1" fill="#808080"/>
<rect x="708.3" y="128.3" width="1" height="14.8" fill="#808080"/>
<text x="649.4" y="140.3" textLength="56.5" lengthAdjust="spacingAndGlyphs" font-size="12.4" stroke="#000000" stroke-width="0.16">GPO Status</text>
<rect x="710.3" y="127.3" width="79.7" height="16.8" fill="#d4d0c8"/>
<rect x="710.3" y="127.3" width="79.7" height="1" fill="#ffffff"/>
<rect x="710.3" y="127.3" width="1" height="16.8" fill="#ffffff"/>
<rect x="710.3" y="143.1" width="79.7" height="1" fill="#404040"/>
<rect x="789" y="127.3" width="1" height="16.8" fill="#404040"/>
<rect x="711.3" y="142.1" width="77.7" height="1" fill="#808080"/>
<rect x="788" y="128.3" width="1" height="14.8" fill="#808080"/>
<text x="717.3" y="140.3" textLength="50.8" lengthAdjust="spacingAndGlyphs" font-size="12.4" stroke="#000000" stroke-width="0.16">WMI Filter</text>
<path d="M356 137 L359 133.3 L362 137 Z" fill="#9a9890"/>
<rect x="289.4" y="144.1" width="93" height="17.1" fill="#d4d0c8"/>
<rect x="402.7" y="144.1" width="352.5" height="17.1" fill="#d4d0c8"/>
<text x="405.1" y="157.3" textLength="104.2" lengthAdjust="spacingAndGlyphs" font-size="12.4" stroke="#000000" stroke-width="0.16">Default Domain Policy</text>
<text x="519.8" y="157.3" textLength="14" lengthAdjust="spacingAndGlyphs" font-size="12.4" stroke="#000000" stroke-width="0.16">No</text>
<text x="574.5" y="157.3" textLength="18.5" lengthAdjust="spacingAndGlyphs" font-size="12.4" stroke="#000000" stroke-width="0.16">Yes</text>
<text x="649.4" y="157.3" textLength="39.2" lengthAdjust="spacingAndGlyphs" font-size="12.4" stroke="#000000" stroke-width="0.16">Enabled</text>
<text x="717.3" y="157.3" textLength="26.5" lengthAdjust="spacingAndGlyphs" font-size="12.4" stroke="#000000" stroke-width="0.16">None</text>
<g transform="translate(386.4 144.3)"><rect x="2.1" y="1.3" width="0.9" height="5.6" fill="#b4b4b4"/><rect x="2.9" y="0.9" width="7.6" height="9.3" fill="#fff"/><rect x="4.8" y="0.1" width="8" height="0.9" fill="#8a8a8a"/><rect x="5" y="2.9" width="4.8" height="1" fill="#0000ff"/><rect x="4" y="4.95" width="5" height="1" fill="#0000ff"/><rect x="5" y="7" width="4" height="1" fill="#0000ff"/><rect x="7.8" y="8.9" width="2.4" height="1" fill="#2020ff"/><path d="M8.4 11.2 H12.8 L12.2 13.6 H8.8 Z" fill="#8c8c8c"/><path d="M11.6 .9 L13.2 .9 L12 5.6 L12.6 11.2 L8 11.4 L9.8 8 L10.2 4.2 Z" fill="#ffff00"/><path d="M12.9 1.2 H14.6 Q16 1.4 15.6 4.4 H13.2" fill="#e4e4e4" stroke="#000" stroke-width="1"/><path d="M13 6.2 Q14.2 10.6 13.2 12.4 Q11.6 14.8 8 13.9" fill="none" stroke="#000" stroke-width="1.2"/><rect x="0" y="8.2" width="7.7" height="7.4" fill="#000"/><rect x="0" y="8.2" width="6.9" height="6.6" fill="#8c8c8c"/><rect x="0.8" y="9" width="6.1" height="5.8" fill="#fff"/><path d="M1.9 13.6 L5 10.5" fill="none" stroke="#000" stroke-width="1.1"/><path d="M2.9 10 H5.7 V12.8 Z" fill="#000"/></g>
</g>
<rect x="289.4" y="489.5" width="465.8" height="16" fill="url(#dw)"/>
<rect x="289.5" y="489.5" width="15.6" height="16" fill="#d4d0c8"/>
<rect x="289.5" y="489.5" width="15.6" height="1" fill="#ffffff"/>
<rect x="289.5" y="489.5" width="1" height="16" fill="#ffffff"/>
<rect x="289.5" y="504.5" width="15.6" height="1" fill="#404040"/>
<rect x="304.1" y="489.5" width="1" height="16" fill="#404040"/>
<rect x="290.5" y="503.5" width="13.6" height="1" fill="#808080"/>
<rect x="303.1" y="490.5" width="1" height="14" fill="#808080"/>
<rect x="739.3" y="489.5" width="15.9" height="16" fill="#d4d0c8"/>
<rect x="739.3" y="489.5" width="15.9" height="1" fill="#ffffff"/>
<rect x="739.3" y="489.5" width="1" height="16" fill="#ffffff"/>
<rect x="739.3" y="504.5" width="15.9" height="1" fill="#404040"/>
<rect x="754.2" y="489.5" width="1" height="16" fill="#404040"/>
<rect x="740.3" y="503.5" width="13.9" height="1" fill="#808080"/>
<rect x="753.2" y="490.5" width="1" height="14" fill="#808080"/>
<rect x="305.5" y="489.5" width="347" height="16" fill="#d4d0c8"/>
<rect x="305.5" y="489.5" width="347" height="1" fill="#ffffff"/>
<rect x="305.5" y="489.5" width="1" height="16" fill="#ffffff"/>
<rect x="305.5" y="504.5" width="347" height="1" fill="#404040"/>
<rect x="651.5" y="489.5" width="1" height="16" fill="#404040"/>
<rect x="306.5" y="503.5" width="345" height="1" fill="#808080"/>
<rect x="650.5" y="490.5" width="1" height="14" fill="#808080"/>
<path d="M298.5 493.7 L298.5 500.8 L294.6 497.25 Z" fill="#000"/>
<path d="M745 493.7 L745 500.8 L748.9 497.25 Z" fill="#000"/>
<rect x="1" y="523.8" width="549.7" height="1" fill="#808080"/>
<rect x="1" y="523.8" width="1" height="18" fill="#808080"/>
<rect x="1" y="540.8" width="549.7" height="1" fill="#ffffff"/>
<rect x="549.7" y="523.8" width="1" height="18" fill="#ffffff"/>
<rect x="552.7" y="523.8" width="130.9" height="1" fill="#808080"/>
<rect x="552.7" y="523.8" width="1" height="18" fill="#808080"/>
<rect x="552.7" y="540.8" width="130.9" height="1" fill="#ffffff"/>
<rect x="682.6" y="523.8" width="1" height="18" fill="#ffffff"/>
<rect x="685.6" y="523.8" width="83.6" height="1" fill="#808080"/>
<rect x="685.6" y="523.8" width="1" height="18" fill="#808080"/>
<rect x="685.6" y="540.8" width="83.6" height="1" fill="#ffffff"/>
<rect x="768.2" y="523.8" width="1" height="18" fill="#ffffff"/>
<text class="t" transform="translate(2.2 537.25) scale(0.93 1)" x="0.44 8.61 12.69 19.14 26.13 29.89 35.48 39.57 45.16 48.50 56.13 63.02 70.97 74.84 77.20 82.80 87.42 91.18 97.42 99.57 104.30 108.39 114.84 120.76 129.89 136.13 138.49 144.09 148.17 154.62 161.08 166.67 170.54 172.69 175.05 181.29 186.02 189.89 192.80 195.70 200.32 204.09 209.68 214.30 218.06 224.30 226.45 231.18 235.06 240.65 247.10 254.09 257.85 264.09 266.45 272.90 279.57" stroke="#000000" stroke-width="0.172">Create a GPO in this domain and link it to this container</text>
<rect x="116" y="130" width="240" height="298" fill="#d4d0c8"/>
<rect x="116" y="130" width="239" height="1" fill="#d4d0c8"/>
<rect x="116" y="130" width="1" height="297" fill="#d4d0c8"/>
<rect x="117" y="131" width="237" height="1" fill="#ffffff"/>
<rect x="117" y="131" width="1" height="295" fill="#ffffff"/>
<rect x="116" y="427" width="240" height="1" fill="#404040"/>
<rect x="355" y="130" width="1" height="298" fill="#404040"/>
<rect x="117" y="426" width="238" height="1" fill="#808080"/>
<rect x="354" y="131" width="1" height="296" fill="#808080"/>
<rect x="119" y="133" width="234" height="17" fill="#0a246a"/>
<text class="t" transform="translate(135 145.45) scale(0.93 1)" x="0.44 8.61 12.69 19.14 26.13 29.89 35.48 39.57 46.02 52.47 58.06 61.61 67.31 69.68 75.92 80.65 84.73 90.32 93.66 101.29 108.18 116.13 119.79 127.74 134.41 138.49 145.49 149.79 154.09" stroke="#ffffff" stroke-width="0.172" fill="#ffffff">Create and Link a GPO Here...</text>
<rect x="135.9" y="146.3" width="7" height="1" fill="#ffffff"/>
<text class="t" transform="translate(135 162.45) scale(0.93 1)" x="0.32 6.02 8.39 14.63 19.35 23.44 29.89 35.48 38.93 46.35 52.26 54.41 60.54 64.09 66.45 72.90 78.49 81.83 89.46 96.35 105.70 110.00 114.30" stroke="#000000" stroke-width="0.172">Link an Existing GPO...</text>
<rect x="135.9" y="163.3" width="5" height="1" fill="#000000"/>
<text class="t" transform="translate(135 179.45) scale(0.93 1)" x="0.22 7.10 9.46 15.70 21.08 25.81 30.43 34.19 40.65 47.10 53.77 57.64 60.54 64.30 70.75 76.99 82.58" stroke="#000000" stroke-width="0.172">Block Inheritance</text>
<rect x="135.9" y="180.3" width="6" height="1" fill="#000000"/>
<rect x="120" y="188" width="232" height="1" fill="#808080"/>
<rect x="120" y="189" width="232" height="1" fill="#ffffff"/>
<text class="t" transform="translate(135 205.45) scale(0.93 1)" x="0.11 8.61 12.69 19.14 25.59 31.18 34.63 41.72 47.96 50.11 52.26 58.18 63.44 67.00 76.13 82.58 89.03 95.27 97.42 99.79 106.24 111.83 115.82 126.45 128.61 134.19 140.86 144.95 151.94 156.24 160.54" stroke="#000000" stroke-width="0.172">Group Policy Modeling Wizard...</text>
<rect x="135.9" y="206.3" width="7" height="1" fill="#000000"/>
<text class="t" transform="translate(135 222.45) scale(0.93 1)" x="0.44 8.39 14.95 22.58 26.46 35.49 39.57 46.02 52.47 58.71 60.86 66.45 73.44 76.99 79.35 85.81 92.26 98.50 100.00 103.66 111.61 117.85 120.75" stroke="#000000" stroke-width="0.172">New Organizational Unit</text>
<rect x="135.9" y="223.3" width="7" height="1" fill="#000000"/>
<rect x="120" y="231" width="232" height="1" fill="#808080"/>
<rect x="120" y="232" width="232" height="1" fill="#ffffff"/>
<text class="t" transform="translate(135 248.45) scale(0.93 1)" x="0.22 7.31 13.76 20.43 24.30 29.89 36.88 41.18 45.49" stroke="#000000" stroke-width="0.172">Search...</text>
<rect x="135.9" y="249.3" width="6" height="1" fill="#000000"/>
<text class="t" transform="translate(135 265.45) scale(0.93 1)" x="0.44 8.39 14.84 21.29 27.74 34.19 39.78 43.45 51.40 57.32 66.45 72.69 75.05 80.65 84.31 92.26 98.71 105.70 109.68 113.76 120.00 122.15 124.52 131.19 135.81 140.11 144.41" stroke="#000000" stroke-width="0.172">Change Domain Controller...</text>
<rect x="175.9" y="266.3" width="7" height="1" fill="#000000"/>
<text class="t" transform="translate(135 282.45) scale(0.93 1)" x="0.44 8.39 14.31 23.44 30.22 36.34" stroke="#000000" stroke-width="0.172">Remove</text>
<rect x="142.9" y="283.3" width="6" height="1" fill="#000000"/>
<text class="t" transform="translate(135 299.45) scale(0.93 1)" x="0.76 8.18 14.30 17.85 20.54 26.67 32.26 35.92 43.66 46.24 50.32 56.56 62.69 66.45 73.12 77.53 82.80 86.46 94.20 99.79 106.46 110.33 115.05 119.14 125.59 132.04 137.63 141.30 149.25 155.17 164.30 170.75 177.74 181.51 188.18 192.05 198.17 202.47 206.78" stroke="#000000" stroke-width="0.172">Active Directory Users and Computers...</text>
<rect x="135.9" y="300.3" width="7" height="1" fill="#000000"/>
<rect x="120" y="308" width="232" height="1" fill="#808080"/>
<rect x="120" y="309" width="232" height="1" fill="#ffffff"/>
<text class="t" transform="translate(135 325.45) scale(0.93 1)" x="0.22 7.10 9.46 16.03" stroke="#000000" stroke-width="0.172">View</text>
<rect x="135.9" y="326.3" width="6" height="1" fill="#000000"/>
<path d="M343 318 L343 325 L346.5 321.5 Z" fill="#000"/>
<text class="t" transform="translate(135 342.45) scale(0.93 1)" x="0.44 8.39 14.95 22.58 26.57 37.21 39.57 46.02 52.47 59.04 66.67 71.29 75.27 79.35 85.28 93.55 97.21 105.16 111.83 115.91" stroke="#000000" stroke-width="0.172">New Window from Here</text>
<rect x="159.9" y="343.3" width="10" height="1" fill="#000000"/>
<rect x="120" y="351" width="232" height="1" fill="#808080"/>
<rect x="120" y="352" width="232" height="1" fill="#ffffff"/>
<text class="t" transform="translate(135 368.45) scale(0.93 1)" x="0.44 8.39 15.38 19.36 23.44 29.68 35.27" stroke="#000000" stroke-width="0.172">Refresh</text>
<rect x="148.9" y="369.3" width="4" height="1" fill="#000000"/>
<rect x="120" y="377" width="232" height="1" fill="#808080"/>
<rect x="120" y="378" width="232" height="1" fill="#ffffff"/>
<text class="t" transform="translate(135 394.45) scale(0.93 1)" x="0.22 7.53 11.61 18.06 24.52 31.19 35.81 39.36 41.72 47.96" stroke="#000000" stroke-width="0.172">Properties</text>
<rect x="141.9" y="395.3" width="4" height="1" fill="#000000"/>
<rect x="120" y="403" width="232" height="1" fill="#808080"/>
<rect x="120" y="404" width="232" height="1" fill="#ffffff"/>
<text class="t" transform="translate(135 420.45) scale(0.93 1)" x="0.44 8.39 14.63 16.99" stroke="#000000" stroke-width="0.172">Help</text>
<rect x="135.9" y="421.3" width="7" height="1" fill="#000000"/>
</svg>
</body></html>
